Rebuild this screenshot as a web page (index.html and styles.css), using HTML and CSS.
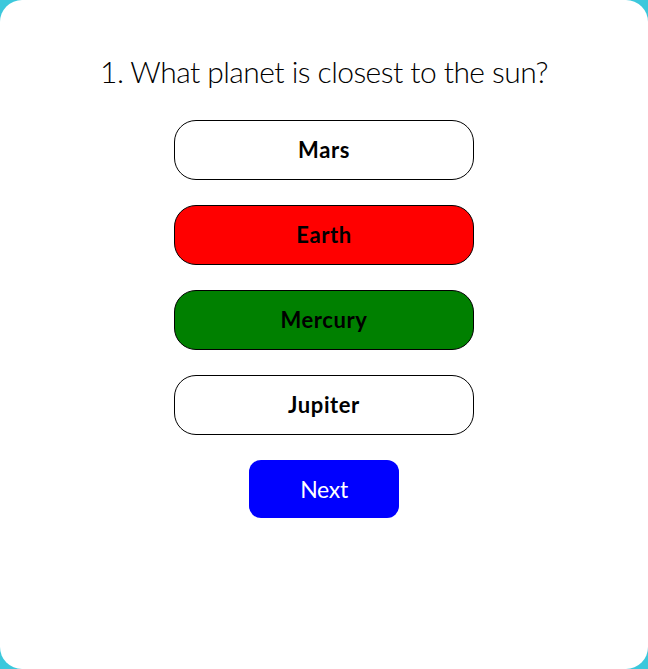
FILE: index.html
```html
<!DOCTYPE html>
<html>
<head>
<meta charset="utf-8">
<link rel="stylesheet" href="styles.css">
</head>
<body>
<div class="card">
  <h1 class="question">1. What planet is closest to the sun?</h1>
  <div class="options">
    <button class="option">Mars</button>
    <button class="option wrong">Earth</button>
    <button class="option right">Mercury</button>
    <button class="option">Jupiter</button>
  </div>
  <button class="next">Next</button>
</div>
</body>
</html>
```
FILE: styles.css
```css
html, body {
  margin: 0;
  padding: 0;
  height: 100%;
}
body {
  background: #3cc8dc;
}
.card {
  box-sizing: border-box;
  width: 648px;
  height: 669px;
  background: #fff;
  border-radius: 22px;
  display: flex;
  flex-direction: column;
  align-items: center;
  padding-top: 52px;
}
.question {
  margin: 0 0 30px 0;
  font-family: Lato, sans-serif;
  font-weight: 300;
  font-size: 30px;
  line-height: 38px;
  letter-spacing: -0.55px;
  color: #000;
}
.options {
  display: flex;
  flex-direction: column;
  gap: 25px;
}
.option {
  width: 300px;
  height: 60px;
  border: 1px solid #000;
  border-radius: 22px;
  background: #fff;
  font-family: Lato, sans-serif;
  font-weight: 700;
  font-size: 22px;
  letter-spacing: 0.6px;
  color: #000;
  padding: 0 0 2px 0;
}
.option.wrong { background: #ff0000; }
.option.right { background: #008000; }
.next {
  margin-top: 25px;
  width: 150px;
  height: 58px;
  border: none;
  border-radius: 12px;
  background: #0000ff;
  color: #fff;
  font-family: Lato, sans-serif;
  font-weight: 400;
  font-size: 23px;
  letter-spacing: -0.3px;
  padding: 0;
}
```
